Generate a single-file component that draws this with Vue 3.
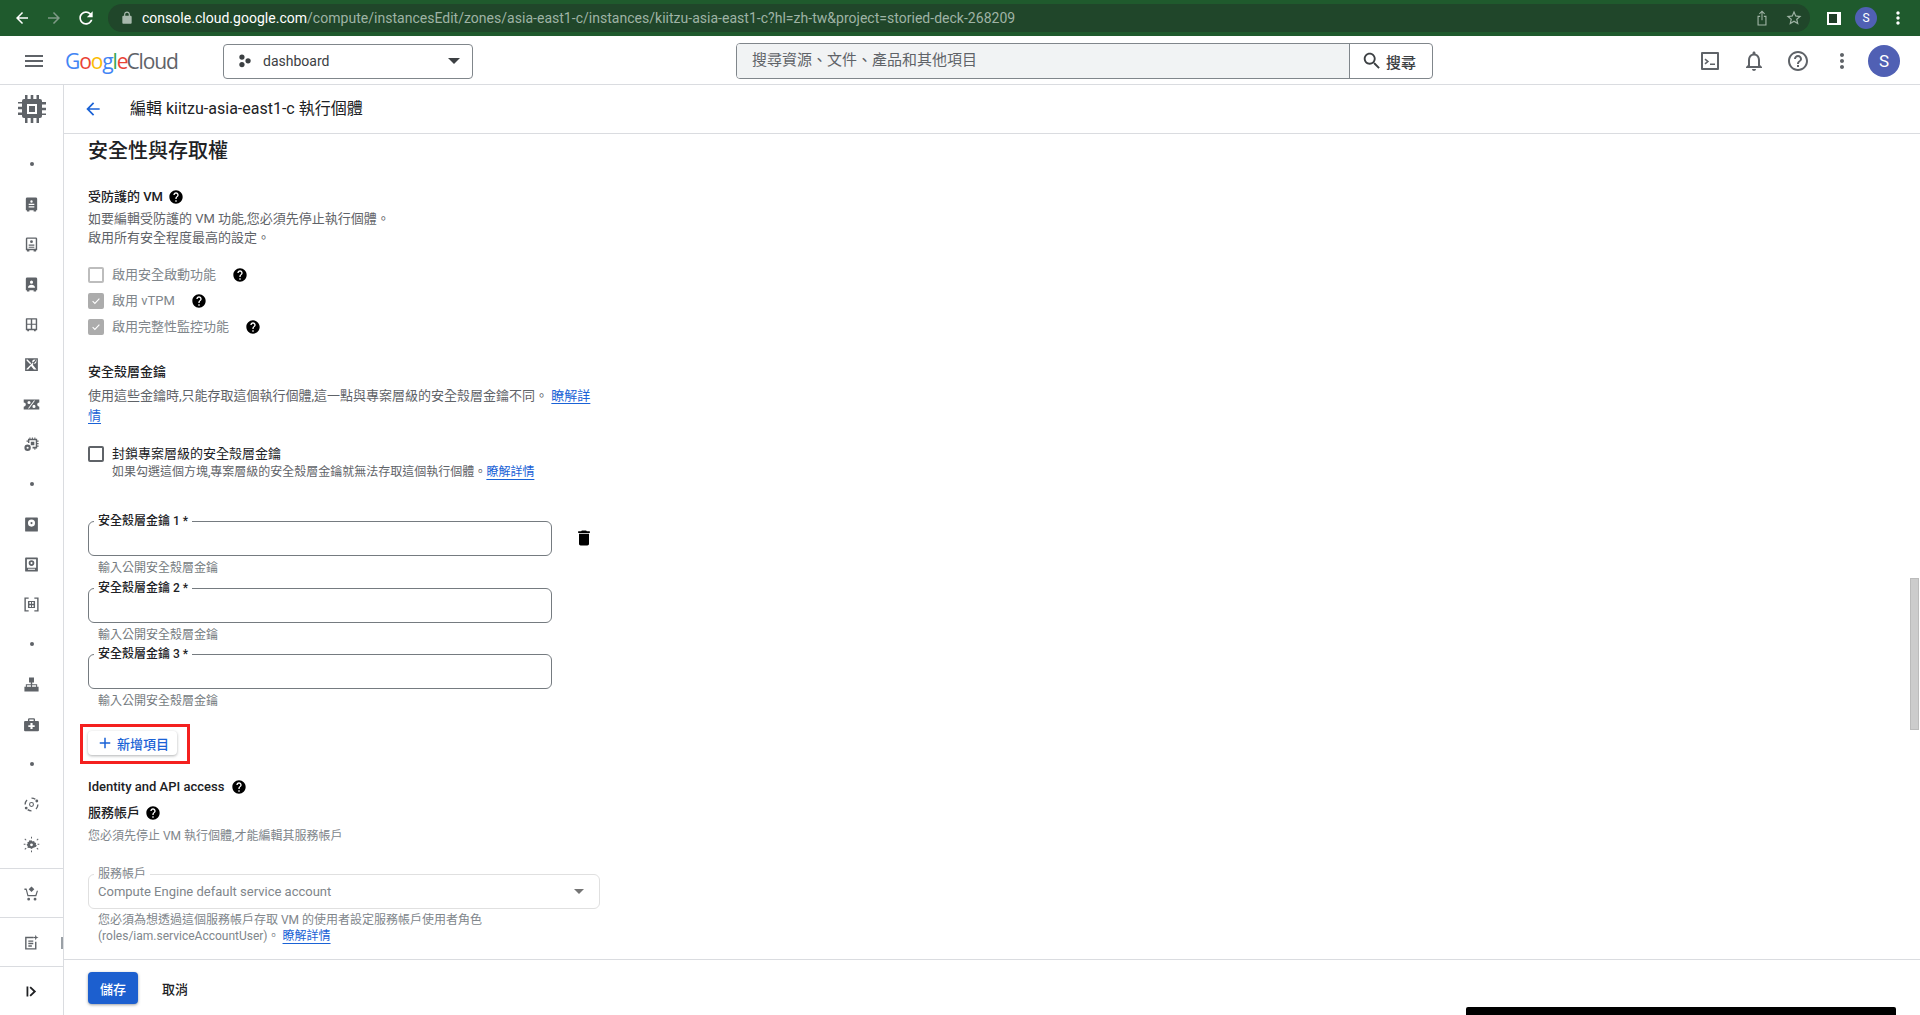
<template>
  <div class="page">
    <!-- browser toolbar -->
    <div class="chrome">
      <div class="chrome-btn"><svg viewBox="0 0 24 24" class="ic18 white"><path :d="icons.back" /></svg></div>
      <div class="chrome-btn"><svg viewBox="0 0 24 24" class="ic18 dim"><path :d="icons.forward" /></svg></div>
      <div class="chrome-btn"><svg viewBox="0 0 24 24" class="ic20 white"><path :d="icons.refresh" /></svg></div>
      <div class="omnibox">
        <svg viewBox="0 0 24 24" class="lock"><path :d="icons.lock" /></svg>
        <span class="url"><span class="url-host">console.cloud.google.com</span>/compute/instancesEdit/zones/asia-east1-c/instances/kiitzu-asia-east1-c?hl=zh-tw&amp;project=storied-deck-268209</span>
        <div class="chrome-btn share">
          <svg viewBox="0 0 24 24" class="ic18 pale"><path :d="icons.share" /></svg>
        </div>
        <div class="chrome-btn">
          <svg viewBox="0 0 24 24" class="ic18 pale"><path :d="icons.star" /></svg>
        </div>
      </div>
      <div class="chrome-btn first-right"><span class="panel-icon"></span></div>
      <div class="chrome-btn"><span class="chrome-avatar">S</span></div>
      <div class="chrome-btn"><svg viewBox="0 0 24 24" class="ic20 white"><path :d="icons.dots" /></svg></div>
    </div>

    <!-- console header -->
    <header class="topbar">
      <button class="menu-btn"><svg viewBox="0 0 24 24" class="ic24 grey"><path :d="icons.menu" /></svg></button>
      <div class="logo">
        <span class="g-blue">G</span><span class="g-red">o</span><span class="g-yellow">o</span><span class="g-blue">g</span><span class="g-green">l</span><span class="g-red">e</span>
        <span class="logo-cloud">Cloud</span>
      </div>
      <div class="project">
        <svg viewBox="0 0 16 16" class="project-dots"><circle cx="4.5" cy="3.5" r="3" /><circle cx="4.5" cy="12" r="3" /><circle cx="11.5" cy="7.8" r="3" /></svg>
        <span>dashboard</span>
        <span class="caret dark"></span>
      </div>
      <div class="search">
        <div class="search-input">搜尋資源、文件、產品和其他項目</div>
        <div class="search-btn">
          <svg viewBox="0 0 24 24" class="ic22"><path :d="icons.search" /></svg>
          <span>搜尋</span>
        </div>
      </div>
      <div class="top-actions">
        <div class="top-btn">
          <svg viewBox="0 0 24 24" class="ic24 grey"><path :d="icons.terminal" /></svg>
        </div>
        <div class="top-btn">
          <svg viewBox="0 0 24 24" class="ic24 grey"><path :d="icons.bell" /></svg>
        </div>
        <div class="top-btn">
          <svg viewBox="0 0 24 24" class="ic24 grey"><path :d="icons.helpOutline" /></svg>
        </div>
        <div class="top-btn">
          <svg viewBox="0 0 24 24" class="ic24 grey"><path :d="icons.dots" /></svg>
        </div>
        <div class="avatar">S</div>
      </div>
    </header>

    <div class="body">
      <aside class="sidebar">
        <div class="side-head">
          <svg viewBox="0 0 30 30" class="chip"><path fill-rule="evenodd" :d="icons.chip" /></svg>
        </div>
        <div class="side-list">
          <div v-for="(item, i) in sideItems" :key="i" class="side-row">
            <span v-if="item === 'dot'" class="side-dot"></span>
            <svg v-else viewBox="0 0 24 24" class="side-icon"><path fill-rule="evenodd" :d="item" /></svg>
          </div>
        </div>
        <div class="side-bottom">
          <div class="side-foot">
            <svg viewBox="0 0 24 24" class="side-icon"><path fill-rule="evenodd" :d="icons.cart" /></svg>
          </div>
          <div class="side-foot">
            <svg viewBox="0 0 24 24" class="side-icon"><path fill-rule="evenodd" :d="icons.notes" /></svg>
          </div>
          <div class="side-foot">
            <svg viewBox="0 0 24 24" class="side-icon black"><path :d="icons.expand" /></svg>
          </div>
        </div>
        <span class="clipped-tip"></span>
      </aside>

      <main class="main">
        <div class="page-title">
          <svg viewBox="0 0 24 24" class="ic20 blue"><path :d="icons.back" /></svg>
          <h1>編輯 kiitzu-asia-east1-c 執行個體</h1>
        </div>

        <div class="content">
          <h2>安全性與存取權</h2>

          <div class="label shielded">受防護的 VM <svg viewBox="0 0 24 24" class="help"><path :d="icons.help" /></svg></div>
          <p class="desc first">如要編輯受防護的 VM 功能,您必須先停止執行個體。<br />啟用所有安全程度最高的設定。</p>

          <div class="checks">
            <div v-for="c in shielded" :key="c.text" class="check-row">
              <span class="box" :class="{ on: c.on }">
                <svg v-if="c.on" viewBox="0 0 16 16"><path d="M3.5 8.2l3 3 6-6.4" /></svg>
              </span>
              <span class="check-text">{{ c.text }}</span>
              <svg viewBox="0 0 24 24" class="help after"><path :d="icons.help" /></svg>
            </div>
          </div>

          <div class="label ssh-head">安全殼層金鑰</div>
          <p class="ssh-desc">使用這些金鑰時,只能存取這個執行個體,這一點與專案層級的安全殼層金鑰不同。 <a>瞭解詳情</a></p>

          <div class="block-row">
            <span class="box strong"></span>
            <span class="block-text">封鎖專案層級的安全殼層金鑰</span>
          </div>
          <p class="block-sub">如果勾選這個方塊,專案層級的安全殼層金鑰就無法存取這個執行個體。<a>瞭解詳情</a></p>

          <div class="keys">
            <div v-for="(k, i) in keys" :key="k" class="key">
              <div class="key-line">
                <div class="field">
                  <span class="field-label">{{ k }}</span>
                </div>
                <svg v-if="i === 0" viewBox="0 0 24 24" class="trash"><path :d="icons.trash" /></svg>
              </div>
              <div class="hint">輸入公開安全殼層金鑰</div>
            </div>
          </div>

          <button class="add-btn">
            <svg viewBox="0 0 24 24" class="ic18 blue"><path :d="icons.add" /></svg>
            新增項目
          </button>

          <div class="label identity">Identity and API access <svg viewBox="0 0 24 24" class="help"><path :d="icons.help" /></svg></div>
          <div class="label account">服務帳戶 <svg viewBox="0 0 24 24" class="help"><path :d="icons.help" /></svg></div>
          <p class="account-desc">您必須先停止 VM 執行個體,才能編輯其服務帳戶</p>

          <div class="select">
            <span class="select-label">服務帳戶</span>
            <span>Compute Engine default service account</span>
            <span class="caret"></span>
          </div>
          <p class="select-hint">您必須為想透過這個服務帳戶存取 VM 的使用者設定服務帳戶使用者角色<br />(roles/iam.serviceAccountUser)。 <a>瞭解詳情</a></p>
        </div>

        <footer class="actions">
          <button class="save">儲存</button>
          <button class="cancel">取消</button>
        </footer>
      </main>
    </div>

    <!-- things captured on top of the page -->
    <div class="scroll-thumb"></div>
    <div class="black-bar"></div>
  </div>
</template>

<script setup>
const icons = {
  back: 'M20 11H7.83l5.59-5.59L12 4l-8 8 8 8 1.41-1.41L7.83 13H20v-2z',
  forward: 'M12 4l-1.41 1.41L16.17 11H4v2h12.17l-5.58 5.59L12 20l8-8z',
  refresh: 'M17.65 6.35C16.2 4.9 14.21 4 12 4c-4.42 0-7.99 3.58-7.99 8s3.57 8 7.99 8c3.73 0 6.84-2.55 7.73-6h-2.08c-.82 2.33-3.04 4-5.65 4-3.31 0-6-2.69-6-6s2.69-6 6-6c1.66 0 3.14.69 4.22 1.78L13 11h7V4l-2.35 2.35z',
  lock: 'M18 8h-1V6c0-2.76-2.24-5-5-5S7 3.24 7 6v2H6c-1.1 0-2 .9-2 2v10c0 1.1.9 2 2 2h12c1.1 0 2-.9 2-2V10c0-1.1-.9-2-2-2zM9 6c0-1.66 1.34-3 3-3s3 1.34 3 3v2H9V6z',
  share: 'M12 2l4 4-1 1-2.3-2.3V15h-1.4V4.7L9 7 8 6zM6 9h3.5v1.5H7.5v10h9v-10h-2V9H18v13H6z',
  star: 'M22 9.24l-7.19-.62L12 2 9.19 8.63 2 9.24l5.46 4.73L5.82 21 12 17.27 18.18 21l-1.63-7.03L22 9.24zM12 15.4l-3.76 2.27 1-4.28-3.32-2.88 4.38-.38L12 6.1l1.71 4.04 4.38.38-3.32 2.88 1 4.28L12 15.4z',
  dots: 'M12 8c1.1 0 2-.9 2-2s-.9-2-2-2-2 .9-2 2 .9 2 2 2zm0 2c-1.1 0-2 .9-2 2s.9 2 2 2 2-.9 2-2-.9-2-2-2zm0 6c-1.1 0-2 .9-2 2s.9 2 2 2 2-.9 2-2-.9-2-2-2z',
  menu: 'M3 18h18v-2H3v2zm0-5h18v-2H3v2zm0-7v2h18V6H3z',
  search: 'M15.5 14h-.79l-.28-.27C15.41 12.59 16 11.11 16 9.5 16 5.91 13.09 3 9.5 3S3 5.91 3 9.5 5.91 16 9.5 16c1.61 0 3.09-.59 4.23-1.57l.27.28v.79l5 4.99L20.49 19l-4.99-5zm-6 0C7.01 14 5 11.99 5 9.5S7.01 5 9.5 5 14 7.01 14 9.5 11.99 14 9.5 14z',
  terminal: 'M4 3h16a1 1 0 0 1 1 1v16a1 1 0 0 1-1 1H4a1 1 0 0 1-1-1V4a1 1 0 0 1 1-1zm1 2v14h14V5H5zm2.5 4.5l3.6 3-3.6 3-1-1.2 2.2-1.8-2.2-1.8 1-1.2zM12 14.5h5V16h-5v-1.5z',
  bell: 'M12 22c1.1 0 2-.9 2-2h-4c0 1.1.9 2 2 2zm6-6v-5c0-3.07-1.63-5.64-4.5-6.32V4c0-.83-.67-1.5-1.5-1.5s-1.5.67-1.5 1.5v.68C7.64 5.36 6 7.92 6 11v5l-2 2v1h16v-1l-2-2zm-2 1H8v-6c0-2.48 1.51-4.5 4-4.5s4 2.02 4 4.5v6z',
  helpOutline: 'M11 18h2v-2h-2v2zm1-16C6.48 2 2 6.48 2 12s4.48 10 10 10 10-4.48 10-10S17.52 2 12 2zm0 18c-4.41 0-8-3.59-8-8s3.59-8 8-8 8 3.59 8 8-3.59 8-8 8zm0-14c-2.21 0-4 1.79-4 4h2c0-1.1.9-2 2-2s2 .9 2 2c0 2-3 1.75-3 5h2c0-2.25 3-2.5 3-5 0-2.21-1.79-4-4-4z',
  help: 'M12 2C6.48 2 2 6.48 2 12s4.48 10 10 10 10-4.48 10-10S17.52 2 12 2zm1 17h-2v-2h2v2zm2.07-7.75l-.9.92C13.45 12.9 13 13.5 13 15h-2v-.5c0-1.1.45-2.1 1.17-2.83l1.24-1.26c.37-.36.59-.86.59-1.41 0-1.1-.9-2-2-2s-2 .9-2 2H8c0-2.21 1.79-4 4-4s4 1.79 4 4c0 .88-.36 1.68-.93 2.25z',
  trash: 'M6 19c0 1.1.9 2 2 2h8c1.1 0 2-.9 2-2V7H6v12zM19 4h-3.5l-1-1h-5l-1 1H5v2h14V4z',
  add: 'M19 13h-6v6h-2v-6H5v-2h6V5h2v6h6v2z',
  expand: 'M5 5h2.5v14H5zM11 5l7.5 7-7.5 7-1.8-1.8 5.5-5.2-5.5-5.2z',
  chip: 'M8 5V1h2.5v4h3.2V1h2.6v4h3.2V1H22v4h1a2 2 0 0 1 2 2v1h4v2.5h-4v3.2h4v2.6h-4v3.2h4V21h-4v1a2 2 0 0 1-2 2h-1v5h-2.5v-5h-3.2v5h-2.6v-5h-3.2v5H8v-5H7a2 2 0 0 1-2-2v-1H1v-2.5h4v-3.2H1v-2.6h4v-3.2H1V8h4V7a2 2 0 0 1 2-2zM10 10v10h10V10zM12 12h6v6h-6z',
  cart: 'M12 2l4 4-4 4-4-4zM2 5h3l1 3 1.5 6h10l2-6h1.7l-2.4 8H6.3L4 7H2zM8 18a2 2 0 1 1 0 4 2 2 0 0 1 0-4zm9 0a2 2 0 1 1 0 4 2 2 0 0 1 0-4z',
  notes: 'M3 4h12v2H5v14h12V11h2v11H3zM7.500 9h7v2h-7zM7.500 12.500h7v2h-7zM7.500 16h5v2h-5zM18 1l1 3 3 1-3 1-1 3-1-3-3-1 3-1z'
}

const sideItems = [
  'dot',
  'M6 2h12a2 2 0 0 1 2 2v16h-1.500v2H15v-2H9v2H5.500v-2H4V4a2 2 0 0 1 2-2zM12 6a1.700 1.700 0 1 0 0 3.400A1.700 1.700 0 0 0 12 6zM8 11v1.800h8V11zM8 14.500v1.800h8v-1.800z',
  'M6 2h12a2 2 0 0 1 2 2v16h-1.500v2H15v-2H9v2H5.500v-2H4V4a2 2 0 0 1 2-2zM6 4v14h12V4zM12 6a2 2 0 1 1 0 4 2 2 0 0 1 0-4zM8 12h8v1.800H8zM8 15h8v1.500H8z',
  'M6 2h12a2 2 0 0 1 2 2v16h-1.500v2H15v-2H9v2H5.500v-2H4V4a2 2 0 0 1 2-2zM12 6.500a2.200 2.200 0 1 0 0 4.400 2.200 2.200 0 0 0 0-4.400zM7 16.500h10c0-2.500-2.500-4-5-4s-5 1.500-5 4z',
  'M5 3h14a1 1 0 0 1 1 1v16h-2v1.500h-2.500V20h-7v1.500H6V20H4V4a1 1 0 0 1 1-1zM6 5v6h5V5zM13 5v6h5V5zM6 12.500V18h5v-5.500zM13 12.500V18h5v-5.500z',
  'M3 3h18v18H3zM6.500 5l5.200 5.200-1.500 1.500L5 6.500V5zM16 5a3 3 0 1 0 0 6 3 3 0 0 0 0-6zM4.800 19h2.500l4-5 4 5h3.900l-5.500-6.800 6-6.700-1.500-.5L5 18z',
  'M1 5h22v4a3 3 0 0 0 0 6v4H1v-4a3 3 0 0 0 0-6zM15.500 6.500L7 17.500h1.600l8.500-11zM8.500 7a2.200 2.200 0 1 0 0 4.400A2.200 2.200 0 0 0 8.500 7zM15.500 12.500a2.200 2.200 0 1 0 0 4.400 2.200 2.200 0 0 0 0-4.400z',
  'M9 2h1.500v2h2V2H14v2h2V2h1.500v2H20v2.500h2V8h-2v2h2v1.500h-2v2h2V15h-2v2.500h-2.500v2H16v-2h-2.500V15H18V6H9v4H7V8H5V6.500h2V4h2zM11 8h5v5h-5zM6.500 12a4.500 4.500 0 1 1 0 9 4.500 4.500 0 0 1 0-9zM6.500 15a1.500 1.500 0 1 0 0 3 1.500 1.500 0 0 0 0-3z',
  'dot',
  'M4 2h16a1 1 0 0 1 1 1v18a1 1 0 0 1-1 1H4a1 1 0 0 1-1-1V3a1 1 0 0 1 1-1zM12 5a5 5 0 1 0 0 10 5 5 0 0 0 0-10zM12 8.500a1.500 1.500 0 1 1 0 3 1.500 1.500 0 0 1 0-3z',
  'M4 2h16a1 1 0 0 1 1 1v18a1 1 0 0 1-1 1H4a1 1 0 0 1-1-1V3a1 1 0 0 1 1-1zM5.500 4.500v12h13v-12zM12 6a4 4 0 1 1 0 8 4 4 0 0 1 0-8zM12 8.500a1.500 1.500 0 1 0 0 3 1.500 1.500 0 0 0 0-3zM7 18h10v1.500H7z',
  'M2 2h6v2H4v16h4v2H2zM16 2h6v20h-6v-2h4V4h-4zM7 7h10v10H7zM9 8.500V11h2.300V8.500zM12.700 8.500V11H15V8.500zM9 13v2.500h2.300V13zM12.700 13v2.500H15V13z',
  'dot',
  'M8.500 2h7v7H13v2.500h7V15h2v7h-7v-7h3.500v-2H12.800v2H15v7H9v-7h2.200v-2H5.500v2H9v7H2v-7h2v-3.500h7V9H8.500z',
  'M9 3h6a2 2 0 0 1 2 2v2h4a1.500 1.500 0 0 1 1.500 1.500V20a1.500 1.500 0 0 1-1.500 1.500H3A1.500 1.500 0 0 1 1.500 20V8.500A1.500 1.500 0 0 1 3 7h4V5a2 2 0 0 1 2-2zM9 5v2h6V5zM10.500 10v3h-3v2.500h3v3H13.500v-3h3V13h-3v-3z',
  'dot',
  'M12 2a10 10 0 0 1 6 2l-1.200 1.400A8 8 0 0 0 12 4zM22 12a10 10 0 0 1-3 7l-1.300-1.300A8 8 0 0 0 20 12zM12 20v2a10 10 0 0 1-6-2l1.200-1.500A8 8 0 0 0 12 20zM2 12a10 10 0 0 1 3-7l1.300 1.300A8 8 0 0 0 4 12zM12 8.500a3.500 3.500 0 1 1 0 7 3.500 3.500 0 0 1 0-7zM12 10a2 2 0 1 0 0 4 2 2 0 0 0 0-4zM19.500 5a2 2 0 1 1 0 4 2 2 0 0 1 0-4zM4.500 15a2 2 0 1 1 0 4 2 2 0 0 1 0-4z',
  'M12 6l1.500 1.600 2.200-.4.700 2.100 2.100.700-.4 2.200 1.600 1.500-1.600 1.500.4-.2L14 17l-2 1.500L10 17l-3.700-.5.4-2.200L5 12.500l1.600-1.500-.4-2.200 2.100-.7.700-2.100 2.200.400zM12 10.500a2 2 0 1 0 0 4 2 2 0 0 0 0-4zM11.300 1h1.400v2.500h-1.400zM11.300 20.500h1.400V23h-1.400zM2 4.500l1-1 2 2-1 1zM19 17.500l1-1 2 2-1 1zM1 11h2.500v1.400H1zM20.500 11H23v1.400h-2.500zM19 5.500l2-2 1 1-2 2zM2 18.500l2-2 1 1-2 2z'
]

const shielded = [
  { text: '啟用安全啟動功能', on: false },
  { text: '啟用 vTPM', on: true },
  { text: '啟用完整性監控功能', on: true }
]

const keys = ['安全殼層金鑰 1 *', '安全殼層金鑰 2 *', '安全殼層金鑰 3 *']
</script>

<style>
html,
body {
  margin: 0;
  height: 100%;
  overflow: hidden;
  background: #fff;
}
</style>

<style scoped>
* {
  box-sizing: border-box;
}

.page {
  position: relative;
  width: 1920px;
  height: 1015px;
  overflow: hidden;
  display: flex;
  flex-direction: column;
  font-family: Roboto, "Noto Sans CJK TC", sans-serif;
  font-size: 13px;
  color: #202124;
  background: #fff;
}

svg {
  display: block;
  flex: none;
}

.ic18 { width: 18px; height: 18px; }
.ic20 { width: 20px; height: 20px; }
.ic22 { width: 22px; height: 22px; fill: #3c4043; }
.ic24 { width: 24px; height: 24px; }
.white { fill: #fff; }
.dim { fill: #7f9a87; }
.pale { fill: #9fb3a5; }
.grey { fill: #5f6368; }
.blue { fill: #1a62d6; }

/* browser toolbar */
.chrome {
  height: 36px;
  flex: none;
  display: flex;
  align-items: center;
  padding-left: 6px;
  background: #1f5a2d;
}

.chrome-btn {
  width: 32px;
  height: 28px;
  flex: none;
  display: flex;
  align-items: center;
  justify-content: center;
}

.first-right {
  margin-left: 8px;
}

.omnibox {
  width: 1702px;
  height: 28px;
  margin-left: 6px;
  flex: none;
  display: flex;
  align-items: center;
  padding-left: 12px;
  border-radius: 14px;
  background: #20462a;
}

.lock {
  width: 14px;
  height: 14px;
  fill: #a8b9ad;
  margin-right: 8px;
}

.url {
  flex: 1;
  font-size: 14px;
  color: #9fb3a5;
  white-space: nowrap;
  letter-spacing: 0.02px;
}

.url-host {
  color: #fff;
}

.panel-icon {
  width: 14px;
  height: 13px;
  border: 2px solid #fff;
  border-right-width: 4px;
  background: #1f3d27;
}

.chrome-avatar {
  width: 22px;
  height: 22px;
  border-radius: 50%;
  background: #5060b4;
  color: #fff;
  font-size: 12px;
  line-height: 22px;
  text-align: center;
}

/* console header */
.topbar {
  height: 49px;
  flex: none;
  display: flex;
  align-items: center;
  padding-top: 2px;
  border-bottom: 1px solid #dadce0;
}

.menu-btn {
  width: 48px;
  height: 40px;
  margin-left: 10px;
  padding: 0;
  border: 0;
  background: none;
  display: flex;
  align-items: center;
  justify-content: center;
}

.logo {
  width: 158px;
  margin-left: 7px;
  font-family: "Open Sans", Roboto, sans-serif;
  font-size: 21px;
  letter-spacing: -1.1px;
  white-space: nowrap;
}

.g-blue { color: #4285f4; }
.g-red { color: #ea4335; }
.g-yellow { color: #fbbc04; }
.g-green { color: #34a853; }

.logo-cloud {
  color: #5f6368;
  margin-left: -1px;
}

.project {
  width: 250px;
  height: 35px;
  display: flex;
  align-items: center;
  padding: 0 12px 0 14px;
  border: 1px solid #80868b;
  border-radius: 4px;
  font-size: 14px;
  color: #3c4043;
}

.project-dots {
  width: 14px;
  height: 14px;
  fill: #3c4043;
  margin-right: 11px;
}

.caret {
  margin-left: auto;
  width: 0;
  height: 0;
  border-left: 5.500px solid transparent;
  border-right: 5.500px solid transparent;
  border-top: 5.500px solid #757575;
}

.caret.dark {
  border-left-width: 6px;
  border-right-width: 6px;
  border-top: 6px solid #3c4043;
}

.search {
  width: 697px;
  height: 36px;
  margin-left: 263px;
  display: flex;
  border: 1px solid #80868b;
  border-radius: 4px;
  overflow: hidden;
}

.search-input {
  flex: 1;
  padding-left: 15px;
  background: #f1f3f4;
  color: #5f6368;
  font-size: 15px;
  line-height: 33px;
  border-right: 1px solid #80868b;
}

.search-btn {
  width: 82px;
  display: flex;
  align-items: center;
  padding-left: 11px;
  gap: 3px;
  color: #3c4043;
  font-size: 15px;
  font-weight: 500;
}

.top-actions {
  margin-left: auto;
  padding-right: 20px;
  display: flex;
  align-items: center;
}

.top-btn {
  width: 44px;
  display: flex;
  justify-content: center;
}

.avatar {
  width: 32px;
  height: 32px;
  margin-left: 4px;
  border-radius: 50%;
  background: #5060b4;
  color: #fff;
  font-size: 17px;
  line-height: 32px;
  text-align: center;
}

/* body */
.body {
  flex: 1;
  min-height: 0;
  display: flex;
}

.sidebar {
  position: relative;
  width: 64px;
  flex: none;
  display: flex;
  flex-direction: column;
  border-right: 1px solid #dadce0;
}

.side-head {
  height: 48px;
  flex: none;
  display: flex;
  align-items: center;
  justify-content: center;
}

.chip {
  width: 30px;
  height: 30px;
  fill: #5f6368;
}

.side-list {
  padding-top: 11px;
}

.side-row {
  height: 40px;
  display: flex;
  align-items: center;
  justify-content: center;
}

.side-dot {
  width: 4px;
  height: 4px;
  border-radius: 50%;
  background: #5f6368;
}

.side-icon {
  width: 17px;
  height: 17px;
  fill: #5f6368;
}

.side-icon.black {
  fill: #202124;
}

.side-bottom {
  margin-top: auto;
}

.side-foot {
  height: 49px;
  display: flex;
  align-items: center;
  justify-content: center;
  border-top: 1px solid #dadce0;
}

.clipped-tip {
  position: absolute;
  right: 0;
  bottom: 66px;
  width: 2px;
  height: 12px;
  background: #9aa0a6;
}

.main {
  flex: 1;
  min-width: 0;
  display: flex;
  flex-direction: column;
}

.page-title {
  height: 49px;
  flex: none;
  display: flex;
  align-items: center;
  padding-left: 19px;
  gap: 27px;
  border-bottom: 1px solid #dadce0;
}

h1 {
  margin: 0;
  font-size: 16px;
  font-weight: 400;
  line-height: 24px;
  color: #202124;
}

.content {
  flex: 1;
  min-height: 0;
  overflow: hidden;
  padding: 5px 0 0 24px;
}

h2 {
  margin: 0;
  font-size: 20px;
  font-weight: 500;
  line-height: 24px;
  color: #202124;
}

p {
  margin: 0;
}

a {
  color: #1a62d6;
  text-decoration: underline;
  text-underline-offset: 3px;
}

.label {
  display: flex;
  align-items: center;
  gap: 5px;
  font-size: 13px;
  font-weight: 500;
  line-height: 16px;
  color: #202124;
}

.help {
  width: 16px;
  height: 16px;
  fill: #000;
}

.shielded {
  margin-top: 26px;
}

.desc {
  margin-top: 3.500px;
  font-size: 13px;
  line-height: 19px;
  color: #5f6368;
}

.checks {
  margin-top: 15.500px;
}

.check-row {
  height: 26px;
  display: flex;
  align-items: center;
  gap: 8px;
}

.box {
  width: 16px;
  height: 16px;
  flex: none;
  border: 2px solid #bdbdbd;
  border-radius: 2px;
}

.box.on {
  background: #acacac;
  border-color: #acacac;
}

.box svg {
  width: 12px;
  height: 12px;
  fill: none;
  stroke: #fff;
  stroke-width: 1.400;
}

.box.strong {
  border-color: #5f6368;
}

.check-text {
  color: #80868b;
  line-height: 16px;
}

.help.after {
  margin-left: 8px;
}

.ssh-head {
  margin-top: 24px;
}

.ssh-desc {
  width: 512px;
  margin-top: 6px;
  line-height: 20px;
  color: #5f6368;
}

.block-row {
  margin-top: 20px;
  display: flex;
  align-items: center;
  gap: 8px;
  line-height: 16px;
  color: #202124;
}

.block-sub {
  margin: 2px 0 0 24px;
  font-size: 12px;
  line-height: 16px;
  color: #5f6368;
}

.keys {
  margin-top: 41px;
  display: flex;
  flex-direction: column;
  gap: 11.500px;
}

.key-line {
  display: flex;
  align-items: center;
}

.field {
  position: relative;
  width: 464px;
  height: 35px;
  border: 1px solid #757b80;
  border-radius: 6px;
}

.field-label {
  position: absolute;
  left: 5px;
  top: -9px;
  padding: 0 4px;
  background: #fff;
  font-size: 12px;
  font-weight: 500;
  line-height: 16px;
  color: #202124;
}

.trash {
  width: 20px;
  height: 20px;
  margin: -2px 0 0 22px;
  fill: #000;
}

.hint {
  margin: 4px 0 0 10px;
  font-size: 12px;
  line-height: 16px;
  color: #757b80;
}

.add-btn {
  position: relative;
  margin-top: 22px;
  width: 89px;
  height: 24px;
  display: flex;
  align-items: center;
  gap: 3px;
  padding: 0 0 0 8px;
  border: 0;
  border-radius: 4px;
  background: #fff;
  box-shadow: 0 1px 3px rgba(60, 64, 67, 0.4);
  font-family: inherit;
  font-size: 13px;
  font-weight: 500;
  color: #1a62d6;
}

/* red highlight drawn on the screenshot */
.add-btn::after {
  content: "";
  position: absolute;
  left: -8px;
  right: -13px;
  top: -7px;
  bottom: -9px;
  border: 3px solid #f4201f;
}

.identity {
  margin-top: 24px;
}

.identity .help {
  margin-left: 2px;
}

.account {
  margin-top: 10px;
}

.account-desc {
  margin-top: 7px;
  font-size: 12px;
  line-height: 16px;
  color: #80868b;
}

.select {
  position: relative;
  margin-top: 30px;
  width: 512px;
  height: 35px;
  display: flex;
  align-items: center;
  padding: 0 15px 0 9px;
  border: 1px solid #e0e0e0;
  border-radius: 6px;
  font-size: 13px;
  color: #80868b;
}

.select-label {
  position: absolute;
  left: 5px;
  top: -9px;
  padding: 0 4px;
  background: #fff;
  font-size: 12px;
  line-height: 16px;
}

.select-hint {
  margin: 3px 0 0 10px;
  font-size: 12px;
  line-height: 16px;
  color: #80868b;
}

.actions {
  height: 56px;
  flex: none;
  display: flex;
  align-items: flex-start;
  padding: 12px 0 0 24px;
  border-top: 1px solid #dadce0;
}

.save {
  width: 50px;
  height: 32px;
  border: 0;
  border-radius: 4px;
  background: #1c5fcf;
  box-shadow: 0 1px 3px rgba(60, 64, 67, 0.5);
  font-family: inherit;
  font-size: 13px;
  font-weight: 500;
  color: #fff;
}

.cancel {
  height: 32px;
  margin-left: 24px;
  padding: 0;
  border: 0;
  background: none;
  font-family: inherit;
  font-size: 13px;
  font-weight: 500;
  color: #202124;
}

.scroll-thumb {
  position: absolute;
  right: 1px;
  top: 578px;
  width: 9px;
  height: 152px;
  background: #ccc;
  border: 1px solid #bbb;
}

.black-bar {
  position: absolute;
  left: 1466px;
  bottom: 0;
  width: 430px;
  height: 8px;
  background: #000;
  border-radius: 2px 2px 0 0;
}
</style>
